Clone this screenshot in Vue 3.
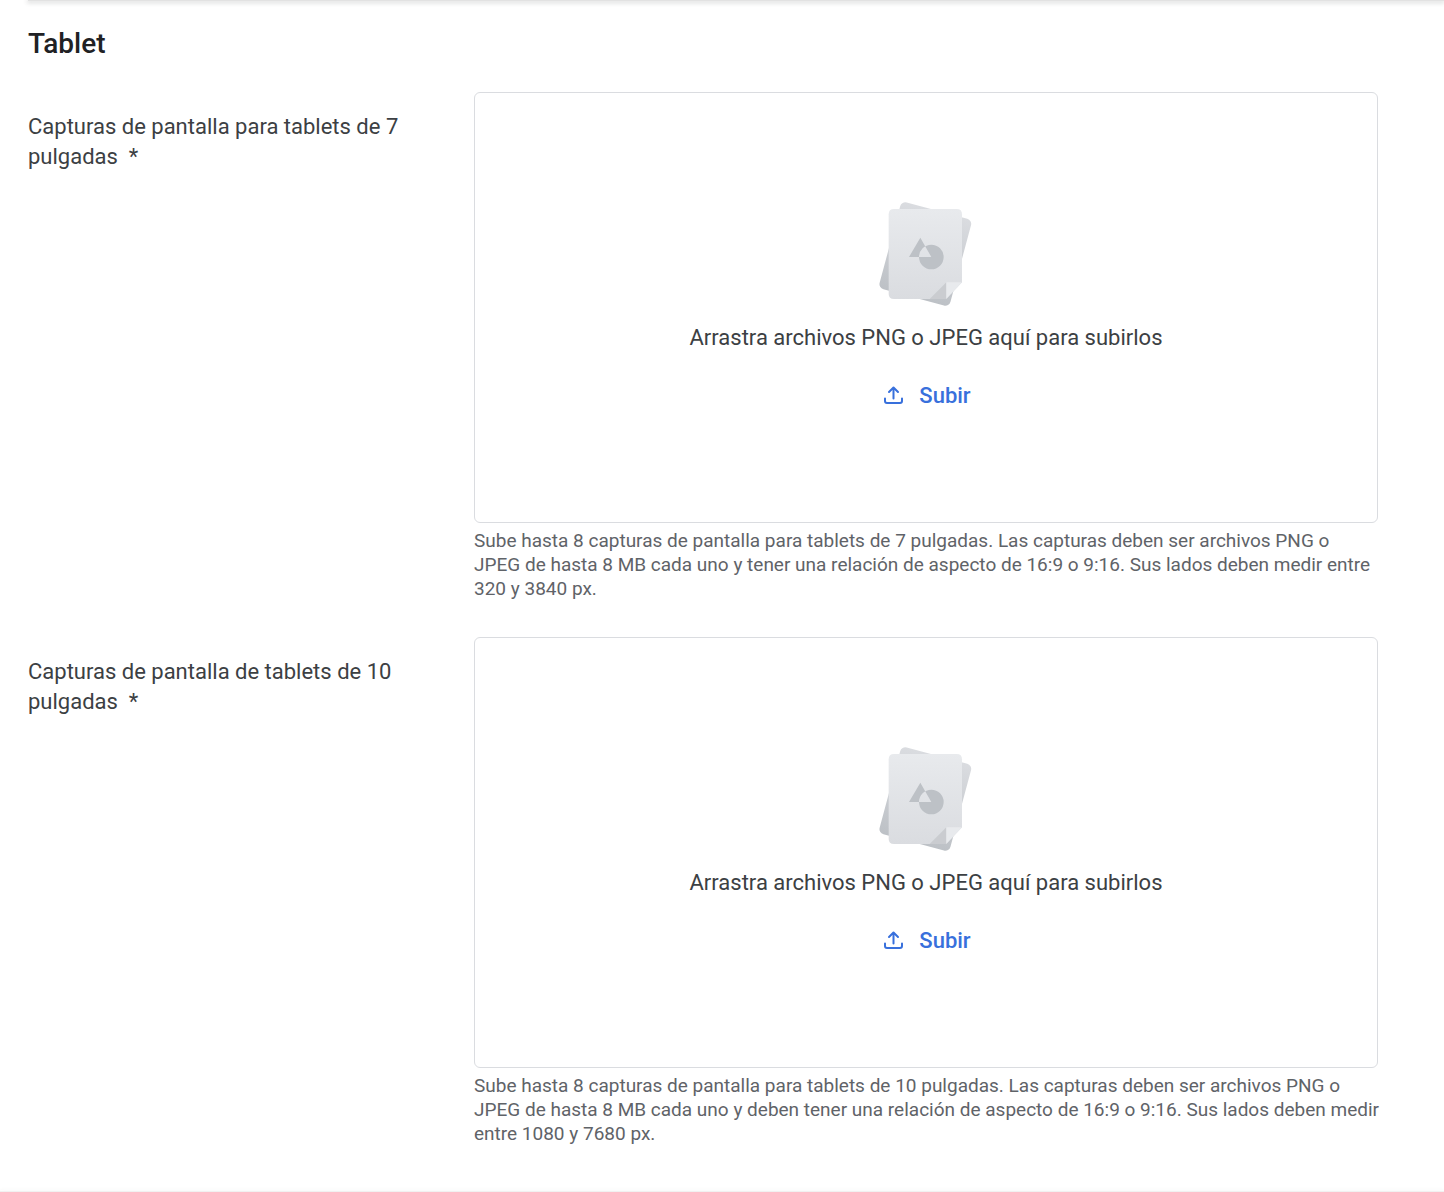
<template>
  <main class="listing">
    <div class="listing__previous" aria-hidden="true"></div>

    <section class="tablet" aria-labelledby="tablet-title">
      <h2 id="tablet-title" class="tablet__title">Tablet</h2>

      <div v-for="field in fields" :key="field.id" class="field">
        <div :id="`${field.id}-label`" class="field__label">
          {{ field.label }}&nbsp; *
        </div>

        <div class="field__content">
          <div
            class="dropzone"
            role="group"
            :aria-labelledby="`${field.id}-label`"
            :aria-describedby="`${field.id}-hint`"
            @dragover.prevent
            @drop.prevent
          >
            <svg class="dropzone__image" viewBox="29 36 276 312" aria-hidden="true">
              <defs>
                <linearGradient :id="`${field.id}-back`" x1="0" y1="0" x2="0" y2="1">
                  <stop offset="0" stop-color="#dadce0" />
                  <stop offset="1" stop-color="#bdc1c6" />
                </linearGradient>
                <linearGradient :id="`${field.id}-front`" x1="0" y1="0" x2="0" y2="1">
                  <stop offset="0" stop-color="#e8eaed" />
                  <stop offset="1" stop-color="#dadce0" />
                </linearGradient>
              </defs>
              <rect
                x="55"
                y="57"
                width="220"
                height="270"
                rx="16"
                transform="rotate(15 165 192)"
                :fill="`url(#${field.id}-back)`"
              />
              <path
                d="M71 57H259Q275 57 275 73V277L228 327H71Q55 327 55 311V73Q55 57 71 57Z"
                :fill="`url(#${field.id}-front)`"
              />
              <path d="M228 277V327H178Z" fill="#caccd0" />
              <path d="M228 277H275L228 326Z" fill="#e8eaed" />
              <path
                d="M150 143L183 201H116ZM146 201a37 37 0 1 0 74 0a37 37 0 1 0 -74 0Z"
                fill="#bdc1c6"
                fill-rule="evenodd"
              />
            </svg>
            <p class="dropzone__text">Arrastra archivos PNG o JPEG aquí para subirlos</p>
            <button type="button" class="dropzone__button">
              <svg class="dropzone__icon" viewBox="0 0 20 20" aria-hidden="true">
                <path d="M10.500 13.500V3M6 7L10.500 2.500L15 7M2 13.500V16Q2 18 4 18H17Q19 18 19 16V13.500" />
              </svg>
              Subir
            </button>
          </div>
          <p :id="`${field.id}-hint`" class="field__hint">{{ field.hint }}</p>
        </div>
      </div>
    </section>

    <div class="listing__footer" aria-hidden="true"></div>
  </main>
</template>

<script setup>
const fields = [
  {
    id: 'tablet-7',
    label: 'Capturas de pantalla para tablets de 7 pulgadas',
    hint: 'Sube hasta 8 capturas de pantalla para tablets de 7 pulgadas. Las capturas deben ser archivos PNG o\nJPEG de hasta 8 MB cada uno y tener una relación de aspecto de 16:9 o 9:16. Sus lados deben medir entre 320 y 3840 px.',
  },
  {
    id: 'tablet-10',
    label: 'Capturas de pantalla de tablets de 10 pulgadas',
    hint: 'Sube hasta 8 capturas de pantalla para tablets de 10 pulgadas. Las capturas deben ser archivos PNG o\nJPEG de hasta 8 MB cada uno y deben tener una relación de aspecto de 16:9 o 9:16. Sus lados deben medir entre 1080 y 7680 px.',
  },
]
</script>

<style>
body {
  background: #fff;
}
</style>

<style scoped>
.listing {
  display: flex;
  flex-direction: column;
  min-height: 100vh;
  overflow: hidden;
  color: #3c4043;
  font-family: Roboto, "Liberation Sans", sans-serif;
}

.listing__previous {
  height: 1px;
  margin-left: 28px;
  background: #e2e2e2;
  box-shadow: 0 1px 4px 1px rgba(60, 64, 67, 0.2);
}

.listing__footer {
  height: 1px;
  margin-top: auto;
  background: #f1f1f1;
  box-shadow: 0 0 4px rgba(60, 64, 67, 0.12);
}

.tablet {
  padding: 26px 66px 40px 28px;
}

.tablet__title {
  margin: 0 0 31px;
  color: #202124;
  font-size: 28px;
  font-weight: 500;
  line-height: 34px;
}

.field {
  display: grid;
  grid-template-columns: 402px minmax(0, 1fr);
  column-gap: 44px;
}

.field + .field {
  margin-top: 36px;
}

.field__label {
  padding-top: 20px;
  font-size: 22px;
  line-height: 30px;
}

.dropzone {
  box-sizing: border-box;
  display: flex;
  flex-direction: column;
  align-items: center;
  justify-content: center;
  min-height: 431px;
  border: 1px solid #dadce0;
  border-radius: 6px;
}

.dropzone__image {
  width: 92px;
  height: 104px;
  overflow: visible;
}

.dropzone__text {
  margin: 17px 0 24px;
  font-size: 22px;
  line-height: 30px;
}

.dropzone__button {
  display: flex;
  align-items: center;
  gap: 16px;
  height: 36px;
  padding: 0 0 0 2px;
  border: 0;
  background: none;
  color: #3870dc;
  cursor: pointer;
  font-family: inherit;
  font-size: 22px;
  font-weight: 500;
}

.dropzone__icon {
  width: 20px;
  height: 20px;
  fill: none;
  stroke: currentColor;
  stroke-width: 2;
  stroke-linecap: round;
  stroke-linejoin: round;
}

.field__hint {
  margin: 6px -8px 0 0;
  color: #5f6368;
  font-size: 19px;
  line-height: 24px;
  white-space: pre-line;
}
</style>
